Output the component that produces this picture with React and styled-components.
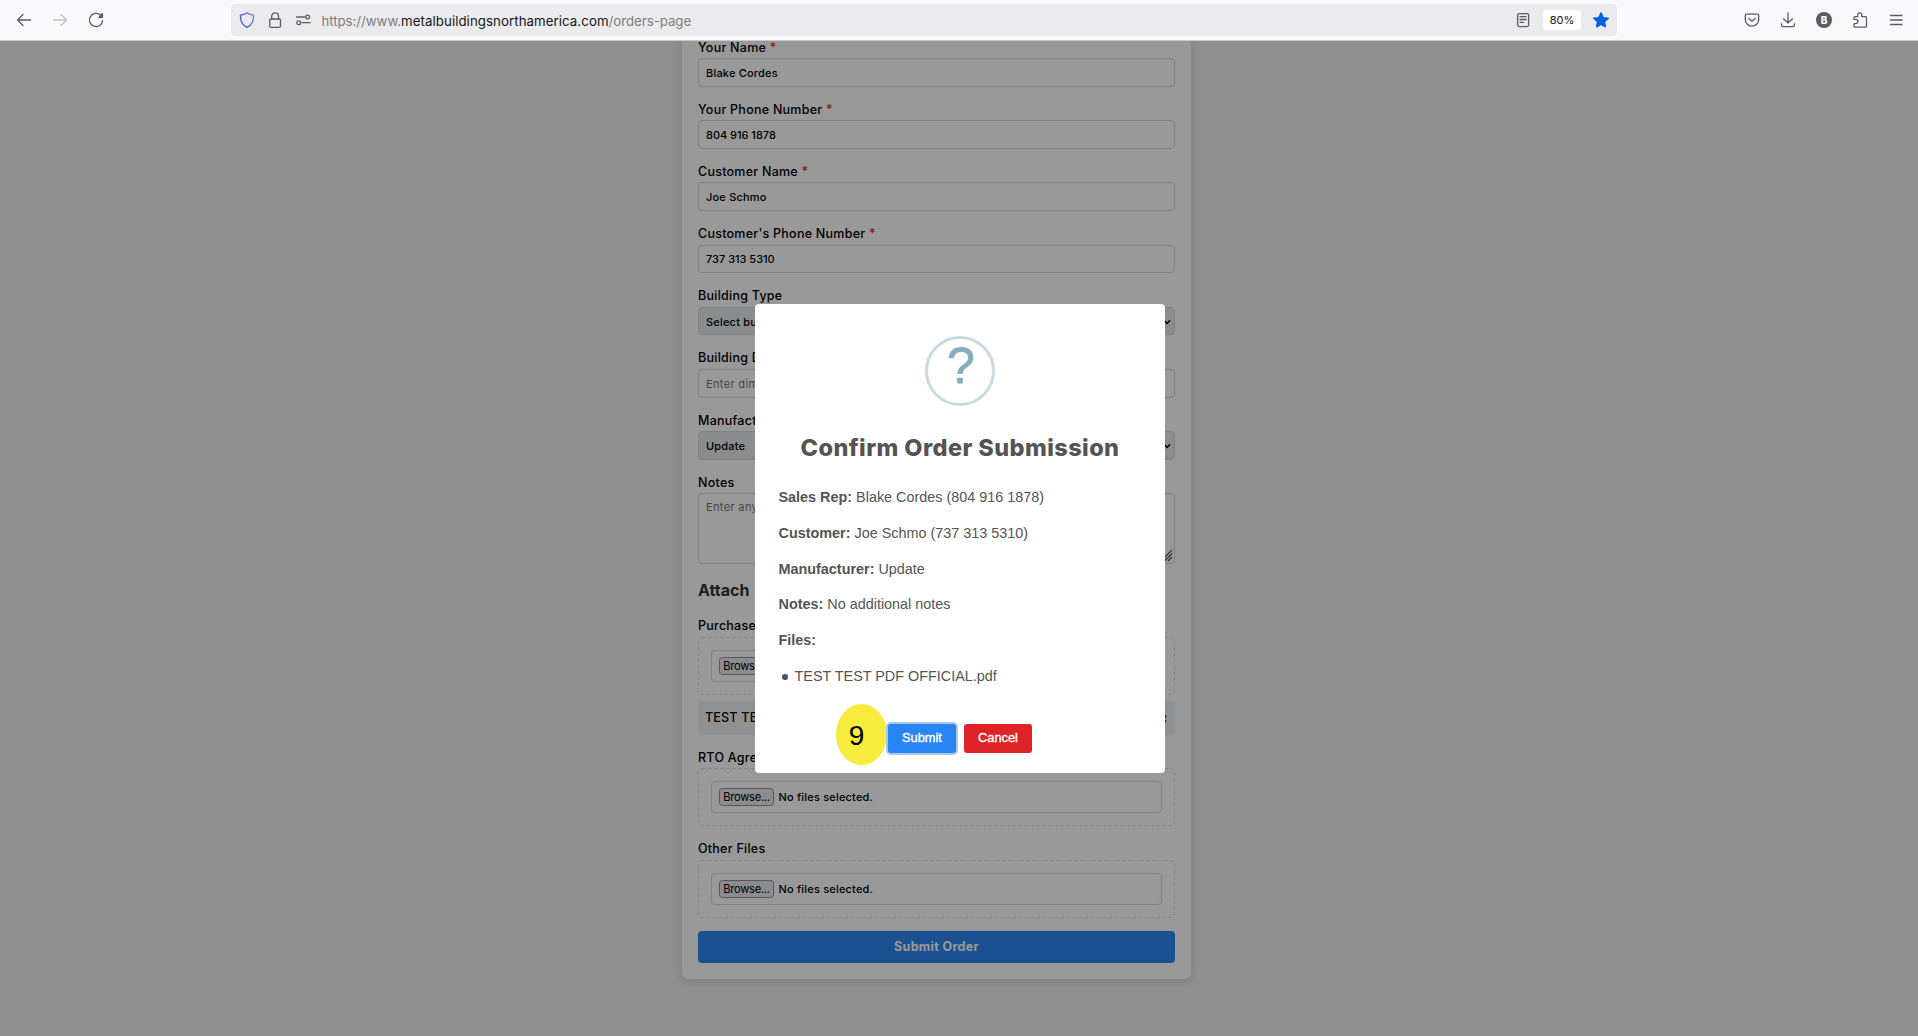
import React from 'react';
import styled, { createGlobalStyle } from 'styled-components';

const GlobalStyle = createGlobalStyle`
  *, *::before, *::after { box-sizing: border-box; }
  html, body { margin: 0; height: 100%; overflow: hidden; }
  body { font-family: Inter, "Liberation Sans", sans-serif; background: #eeeeee; }
`;

const Window = styled.div`
  display: flex;
  flex-direction: column;
  width: 100vw;
  height: 100vh;
  overflow: hidden;
`;

/* ---------- browser toolbar ---------- */

const Toolbar = styled.header`
  display: grid;
  grid-template-columns: 231px 1386px 1fr;
  align-items: center;
  flex: none;
  height: 41px;
  padding-bottom: 1px;
  background: #f9f9fb;
  border-bottom: 1px solid #c9c9cb;
`;

const NavButtons = styled.nav`
  display: flex;
  align-items: center;
  gap: 20px;
  padding: 1px 0 0 16px;
`;

const Icon = styled.svg`
  display: block;
  flex: none;
  width: 16px;
  height: 16px;
  fill: none;
  stroke: ${(p) => p.$color || '#5b5b66'};
  stroke-width: 1.3;
  stroke-linecap: round;
  stroke-linejoin: round;
`;

const AddressBar = styled.div`
  display: flex;
  align-items: center;
  height: 32px;
  margin-top: 1px;
  padding: 0 8px;
  border-radius: 4px;
  background: #ebebed;
`;

const SiteIcons = styled.div`
  display: flex;
  gap: 12px;
  width: 82.4px;
`;

const Url = styled.div`
  flex: 1;
  padding-top: 1px;
  font-size: 13.25px;
  line-height: 16px;
  letter-spacing: -0.03px;
  color: #7c7c80;
`;

const Domain = styled.span`
  color: #15141a;
  letter-spacing: 0.07px;
`;

const BarActions = styled.div`
  display: flex;
  align-items: center;
`;

const ZoomLevel = styled.span`
  width: 38px;
  height: 20px;
  margin: 0 12px;
  border-radius: 3px;
  background: #fff;
  color: #15141a;
  font-size: 11px;
  line-height: 20px;
  text-align: center;
`;

const Extensions = styled.div`
  display: flex;
  justify-content: flex-end;
  gap: 20px;
  padding: 1px 14px 0 0;
`;

/* ---------- page ---------- */

const Viewport = styled.main`
  position: relative;
  flex: 1;
  overflow: hidden;
  background: #eeeeee;
`;

const FormCard = styled.form`
  display: flex;
  flex-direction: column;
  width: 509px;
  height: 938px;
  margin-left: 682px;
  padding: 0 16px;
  border-radius: 0 0 7px 7px;
  background: #fff;
  box-shadow: 0 2px 8px rgba(0, 0, 0, 0.14);
`;

const Field = styled.div`
  display: flex;
  flex-direction: column;
  height: 62.1px;
`;

const Label = styled.label`
  height: 17.3px;
  font-size: 12.5px;
  font-weight: 500;
  line-height: 14px;
  letter-spacing: 0.25px;
  white-space: nowrap;
  color: #000;
`;

const Required = styled.span`
  color: #dc2626;
`;

const Control = styled.div`
  display: flex;
  justify-content: space-between;
  align-items: ${(p) => (p.$tall ? 'flex-start' : 'center')};
  height: ${(p) => (p.$tall ? 71 : 28.8)}px;
  padding: ${(p) => (p.$tall ? '6px 7px' : '1px 7px 0')};
  border: 1px solid #d6d6d8;
  border-radius: 4px;
  background: ${(p) => (p.$select ? '#e6e9ed' : '#fff')};
  color: ${(p) => (p.$placeholder ? '#757575' : '#000')};
  font-size: 11px;
  font-weight: ${(p) => (p.$placeholder ? 400 : 500)};
  line-height: 14px;
  letter-spacing: ${(p) => (p.$numeric ? -0.02 : p.$placeholder ? 0.35 : 0.2)}px;
`;

const Chevron = styled.svg`
  width: 8px;
  height: 6px;
  margin-right: -4px;
  fill: none;
  stroke: #000;
  stroke-width: 1.5;
`;

const Grip = styled.svg`
  align-self: flex-end;
  width: 13px;
  height: 13px;
  margin: 0 -6px -5px 0;
  stroke: #555;
  stroke-width: 1.2;
`;

const SectionTitle = styled.h2`
  height: 39px;
  margin: 0;
  font-size: 16px;
  font-weight: 700;
  line-height: 20px;
  word-spacing: 2px;
  color: #333;
`;

const NotesField = styled.div`
  display: flex;
  flex-direction: column;
  height: 104.6px;
`;

const UploadField = styled.div`
  display: flex;
  flex-direction: column;
  margin-bottom: ${(p) => p.$gap}px;
`;

const DropFrame = styled.svg`
  position: absolute;
  inset: 0;
  width: 100%;
  height: 100%;
  fill: none;
  stroke: #d6d6d8;
  stroke-dasharray: 3 3;
`;

const DropZone = styled.div`
  position: relative;
  height: 58px;
  padding: 13px;
`;

const FileInput = styled.div`
  display: flex;
  align-items: center;
  gap: 4.4px;
  height: 32px;
  padding: 0 7px;
  border: 1px solid #d6d6d8;
  border-radius: 4px;
  font-size: 11px;
  font-weight: 500;
  letter-spacing: 0.2px;
`;

const Browse = styled.span`
  width: 55px;
  height: 18px;
  border: 1px solid #8f8f9d;
  border-radius: 3.5px;
  background: #e9e9ed;
  font-size: 11.2px;
  font-weight: 400;
  line-height: 16px;
  letter-spacing: -0.3px;
  text-align: center;
`;

const AttachedFile = styled.div`
  display: flex;
  justify-content: space-between;
  align-items: center;
  height: 34px;
  margin-top: 6px;
  padding: 0 7px;
  border-radius: 4px;
  background: #eff2f6;
  font-size: 12.5px;
  font-weight: 500;
  letter-spacing: 0.2px;
`;

const Remove = styled.span`
  color: #dc2626;
  font-size: 14px;
  font-weight: 800;
`;

const SubmitOrder = styled.button`
  height: 32px;
  padding: 0;
  border: 0;
  border-radius: 4px;
  background: #2d87f2;
  color: #fff;
  font: 700 12.5px Inter, sans-serif;
  letter-spacing: 0.33px;
`;

/* ---------- confirmation dialog ---------- */

const Backdrop = styled.div`
  position: absolute;
  inset: 0;
  display: flex;
  justify-content: center;
  align-items: flex-start;
  padding: 263px 0 0 2px;
  background: rgba(0, 0, 0, 0.4);
`;

const Dialog = styled.section`
  display: flex;
  flex-direction: column;
  align-items: center;
  width: 410px;
  height: 469px;
  padding-top: 32px;
  border-radius: 4px;
  background: #fff;
  color: #545454;
  font-family: "Liberation Sans", Arial, sans-serif;
`;

const QuestionMark = styled.div`
  flex: none;
  width: 70px;
  height: 70px;
  padding-left: 2px;
  border: 3px solid #c9dae1;
  border-radius: 50%;
  color: #87adbd;
  font-size: 50px;
  line-height: 54px;
  text-align: center;
  -webkit-text-stroke: 0.8px #87adbd;
`;

const DialogTitle = styled.h1`
  margin: 25.5px 0 0;
  font-family: Inter, sans-serif;
  font-size: 23.5px;
  font-weight: 800;
  line-height: 32px;
  letter-spacing: 0.42px;
  white-space: nowrap;
`;

const Summary = styled.div`
  align-self: stretch;
  padding: 16.5px 23px 0 23.5px;
  font-size: 14.4px;
`;

const SummaryLine = styled.p`
  height: 35.75px;
  margin: 0;
  line-height: 35.75px;
`;

const FileList = styled.ul`
  margin: 0;
  padding: 0 0 0 16px;
  line-height: 35.75px;
  list-style: none;
`;

const FileItem = styled.li`
  display: flex;
  align-items: center;
  &::before {
    content: '';
    width: 5.5px;
    height: 5.5px;
    margin: 1px 7px 0 -12.5px;
    border-radius: 50%;
    background: #545454;
  }
`;

const DialogActions = styled.div`
  position: relative;
  display: flex;
  gap: 8px;
  margin-top: 29.5px;
`;

const DialogButton = styled.button`
  position: relative;
  width: 68px;
  height: 29px;
  padding: 0 0 2px;
  border: 0;
  border-radius: 3px;
  background: ${(p) => (p.$danger ? '#e02329' : '#2985f5')};
  box-shadow: ${(p) => (p.$focused ? '0 0 0 2px #a9c8e8' : 'none')};
  color: #fff;
  font: 12.8px "Liberation Sans", Arial, sans-serif;
  -webkit-text-stroke: 0.35px #fff;
`;

const StepBadge = styled.div`
  position: absolute;
  left: -52px;
  top: -20px;
  width: 51px;
  height: 61px;
  padding: 0 10px 0 0;
  border-radius: 50%;
  background: #f7ec3d;
  color: #000;
  font-size: 28px;
  line-height: 63px;
  text-align: center;
`;

function Req() {
  return <Required>*</Required>;
}

function TextField({ label, required, value, placeholder, select, numeric }) {
  return (
    <Field>
      <Label>{label} {required && <Req />}</Label>
      <Control $placeholder={!!placeholder} $select={select} $numeric={numeric}>
        {value || placeholder}
        {select && <Chevron viewBox="0 0 8 6"><path d="M1 1.2 4 4.4 7 1.2" /></Chevron>}
      </Control>
    </Field>
  );
}

function Upload({ label, required, gap, attached }) {
  return (
    <UploadField $gap={gap}>
      <Label>{label} {required && <Req />}</Label>
      <DropZone>
        <DropFrame><rect x="0.5" y="0.5" width="476" height="57" rx="4" /></DropFrame>
        <FileInput>
          <Browse>Browse...</Browse>
          {attached ? attached : 'No files selected.'}
        </FileInput>
      </DropZone>
      {attached && <AttachedFile>{attached}<Remove>×</Remove></AttachedFile>}
    </UploadField>
  );
}

function BrowserToolbar() {
  return (
    <Toolbar>
      <NavButtons>
        <Icon viewBox="0 0 16 16"><path d="M14.5 8H1.5M7 2.5 1.5 8 7 13.5" /></Icon>
        <Icon viewBox="0 0 16 16" $color="#bfbfc3"><path d="M1.5 8h13M9 2.5 14.5 8 9 13.5" /></Icon>
        <Icon viewBox="0 0 16 16">
          <path d="M12.6 3.2A6.6 6.6 0 1 0 14.6 8.6" />
          <path d="M14.4 1.8v3.6h-3.600z" fill="#5b5b66" />
        </Icon>
      </NavButtons>
      <AddressBar>
        <SiteIcons>
          <Icon viewBox="0 0 16 16">
            <defs>
              <linearGradient id="shield" x1="0" y1="1" x2="1" y2="0">
                <stop offset="0.35" stopColor="#3a62d8" />
                <stop offset="1" stopColor="#9a6cf0" />
              </linearGradient>
            </defs>
            <g stroke="url(#shield)">
              <path d="M8 .8C9.800 2.300 12 3 14.600 3.200c.2 5.400-1.900 9.900-6.600 12.100C3.300 13.100 1.200 8.600 1.400 3.200 4 3 6.200 2.300 8 .8z" />
            </g>
          </Icon>
          <Icon viewBox="0 0 16 16">
            <rect x="2.700" y="7" width="10.800" height="8.300" rx="1.300" />
            <path d="M4.700 7V4.200a3.400 3.400 0 0 1 6.800 0V7" />
          </Icon>
          <Icon viewBox="0 0 16 16">
            <path d="M1.500 5h8M7 10.700h8" />
            <circle cx="12.700" cy="5" r="1.900" />
            <circle cx="3.700" cy="10.700" r="1.900" />
          </Icon>
        </SiteIcons>
        <Url>https://www.<Domain>metalbuildingsnorthamerica.com</Domain>/orders-page</Url>
        <BarActions>
          <Icon viewBox="0 0 16 16">
            <rect x="2.600" y="1.600" width="11" height="13" rx="1.500" />
            <path d="M5 4.700h6M5 7.500h6M5 10.300h3.500" />
          </Icon>
          <ZoomLevel>80%</ZoomLevel>
          <Icon viewBox="0 0 16 16" $color="#0561e0">
            <path fill="#0561e0" d="m8 .9 2.200 4.700 5.100.6-3.800 3.500 1 5.200L8 12.400l-4.500 2.500 1-5.200L.7 6.200l5.100-.6z" />
          </Icon>
        </BarActions>
      </AddressBar>
      <Extensions>
        <Icon viewBox="0 0 16 16">
          <path d="M2.700 2.200h10.600a1.400 1.400 0 0 1 1.400 1.400V7.500a6.700 6.700 0 0 1-13.400 0V3.600a1.400 1.400 0 0 1 1.400-1.400z" />
          <path d="M4.900 6.500 8 9.400l3.100-2.900" />
        </Icon>
        <Icon viewBox="0 0 16 16">
          <path d="M8 .8v10M3.600 6.800 8 11l4.400-4.200M1.600 11.700v1.500a1.400 1.400 0 0 0 1.400 1.400h10a1.400 1.400 0 0 0 1.400-1.400v-1.500" />
        </Icon>
        <Icon viewBox="0 0 16 16" $color="none">
          <circle cx="8" cy="8" r="8" fill="#5b5b66" />
          <text x="8" y="11.600" textAnchor="middle" fontFamily="Inter" fontSize="10" fontWeight="800" fill="#fff">B</text>
        </Icon>
        <Icon viewBox="0 0 16 16">
          <path d="M2 7.300V5.600a1 1 0 0 1 1-1h2.700V2.900a2 2 0 0 1 4 0v1.700h3.800a1 1 0 0 1 1 1v8.600a1 1 0 0 1-1 1H3a1 1 0 0 1-1-1v-2.600h1.800a2.100 2.100 0 0 0 0-4.300z" />
        </Icon>
        <Icon viewBox="0 0 16 16"><path d="M2.500 3.500h11.500M2.500 8h11.500M2.500 12.500h11.500" /></Icon>
      </Extensions>
    </Toolbar>
  );
}

export default function App() {
  return (
    <Window>
      <GlobalStyle />
      <BrowserToolbar />
      <Viewport>
        <FormCard>
          <TextField label="Your Name" required value="Blake Cordes" />
          <TextField label="Your Phone Number" required numeric value="804 916 1878" />
          <TextField label="Customer Name" required value="Joe Schmo" />
          <TextField label="Customer's Phone Number" required numeric value="737 313 5310" />
          <TextField label="Building Type" select value="Select building type" />
          <TextField label="Building Dimensions" placeholder="Enter dimensions" />
          <TextField label="Manufacturer" select value="Update" />
          <NotesField>
            <Label>Notes</Label>
            <Control $tall $placeholder>
              Enter any additional notes
              <Grip viewBox="0 0 13 13"><path d="M1 12 12 1M4.500 12 12 4.500M8 12 12 8" /></Grip>
            </Control>
          </NotesField>
          <SectionTitle>Attach Files</SectionTitle>
          <Upload label="Purchase Order" required gap={16.2} attached="TEST TEST PDF OFFICIAL.pdf" />
          <Upload label="RTO Agreement" gap={16.2} />
          <Upload label="Other Files" gap={13} />
          <SubmitOrder type="button">Submit Order</SubmitOrder>
        </FormCard>
        <Backdrop>
          <Dialog>
            <QuestionMark>?</QuestionMark>
            <DialogTitle>Confirm Order Submission</DialogTitle>
            <Summary>
              <SummaryLine><b>Sales Rep:</b> Blake Cordes (804 916 1878)</SummaryLine>
              <SummaryLine><b>Customer:</b> Joe Schmo (737 313 5310)</SummaryLine>
              <SummaryLine><b>Manufacturer:</b> Update</SummaryLine>
              <SummaryLine><b>Notes:</b> No additional notes</SummaryLine>
              <SummaryLine><b>Files:</b></SummaryLine>
              <FileList><FileItem>TEST TEST PDF OFFICIAL.pdf</FileItem></FileList>
            </Summary>
            <DialogActions>
              <StepBadge>9</StepBadge>
              <DialogButton $focused>Submit</DialogButton>
              <DialogButton $danger>Cancel</DialogButton>
            </DialogActions>
          </Dialog>
        </Backdrop>
      </Viewport>
    </Window>
  );
}
